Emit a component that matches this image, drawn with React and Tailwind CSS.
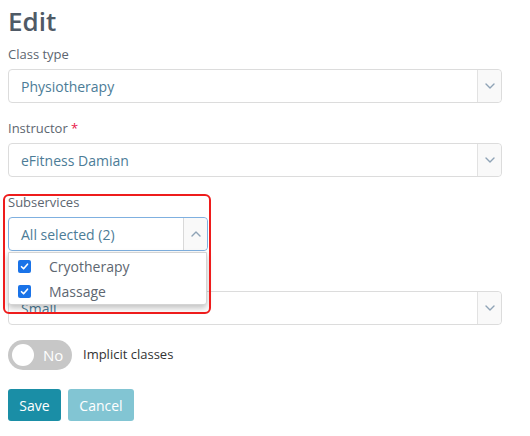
import React from "react";

const Chevron = ({ up }) => (
  <svg width="10" height="6" viewBox="0 0 10 6" fill="none" stroke="#8fa3b6" strokeWidth="1.4" strokeLinecap="round" strokeLinejoin="round">
    {up ? <path d="M1 5 L5 1 L9 5" /> : <path d="M1 1 L5 5 L9 1" />}
  </svg>
);

const Select = ({ value, open, className = "" }) => (
  <div className={`flex h-[34px] rounded-[4px] border bg-white ${open ? "border-[#7fb0e0]" : "border-[#dcdcdc]"} ${className}`}>
    <div className="flex flex-1 items-center pl-[12px] text-[14px] text-[#4c7c97]">{value}</div>
    <div className={`flex w-[24px] items-center justify-center rounded-r-[4px] border-l bg-[#f9f9f9] ${open ? "border-[#d9d9d9]" : "border-[#e2e2e2]"}`}>
      <Chevron up={open} />
    </div>
  </div>
);

const Field = ({ label, required, children, className = "" }) => (
  <div className={`flex flex-col ${className}`}>
    <div className="mb-[5px] h-[20px] text-[13px] leading-[20px] text-[#5d6670]">
      {label}
      {required && <span className="text-[#e8194a]"> *</span>}
    </div>
    {children}
  </div>
);

const Check = () => (
  <span className="flex h-[13px] w-[13px] items-center justify-center rounded-[2px] bg-[#1a73e8]">
    <svg width="9" height="9" viewBox="0 0 9 9" fill="none" stroke="white" strokeWidth="1.6" strokeLinecap="round" strokeLinejoin="round">
      <path d="M1.5 4.7 L3.6 6.8 L7.5 2.2" />
    </svg>
  </span>
);

export default function App() {
  return (
    <div className="relative h-[436px] w-[530px] overflow-hidden bg-white pl-[8px] pr-[28px] pt-[4px]" style={{ fontFamily: '"Open Sans", sans-serif' }}>
      <h1 className="mb-[6px] h-[34px] text-[26px] font-semibold leading-[34px] text-[#4f5a66]">Edit</h1>
      <div className="flex flex-col gap-[15px]">
        <Field label="Class type">
          <Select value="Physiotherapy" />
        </Field>
        <Field label="Instructor" required>
          <Select value="eFitness Damian" />
        </Field>
        <Field label="Subservices" className="relative z-10 w-[200px]">
          <Select value="All selected (2)" open />
          <div className="absolute left-0 top-[60px] w-[199px] rounded-b-[3px] border border-[#d4d4d4] bg-white shadow-[0_3px_6px_rgba(0,0,0,0.25)]">
            <div className="flex h-[26px] items-center pl-[9px] text-[14px] text-[#5d6670]">
              <Check />
              <span className="ml-[18px]">Cryotherapy</span>
            </div>
            <div className="flex h-[25px] items-center pl-[9px] text-[14px] text-[#5d6670]">
              <Check />
              <span className="ml-[18px]">Massage</span>
            </div>
          </div>
        </Field>
        <Field label="Size">
          <Select value="Small" />
        </Field>
        <div className="flex items-center">
          <div className="flex h-[30px] w-[64px] items-center rounded-full bg-[#c7c7c7] pl-[4px]">
            <span className="h-[22px] w-[22px] rounded-full bg-white" />
            <span className="ml-[9px] text-[15px] text-white">No</span>
          </div>
          <span className="ml-[11px] text-[13px] text-[#333]">Implicit classes</span>
        </div>
      </div>
      <div className="mt-[19px] flex gap-[7px]">
        <button className="h-[32px] w-[53px] rounded-[3px] bg-[#1a8ea6] text-[14px] text-white">Save</button>
        <button className="h-[32px] w-[66px] rounded-[3px] bg-[#82c5d3] text-[14px] text-white">Cancel</button>
      </div>
      <div className="pointer-events-none absolute left-[3px] top-[194px] z-20 h-[120px] w-[208px] rounded-[6px] border-2 border-[#ee1c1c]" />
    </div>
  );
}
